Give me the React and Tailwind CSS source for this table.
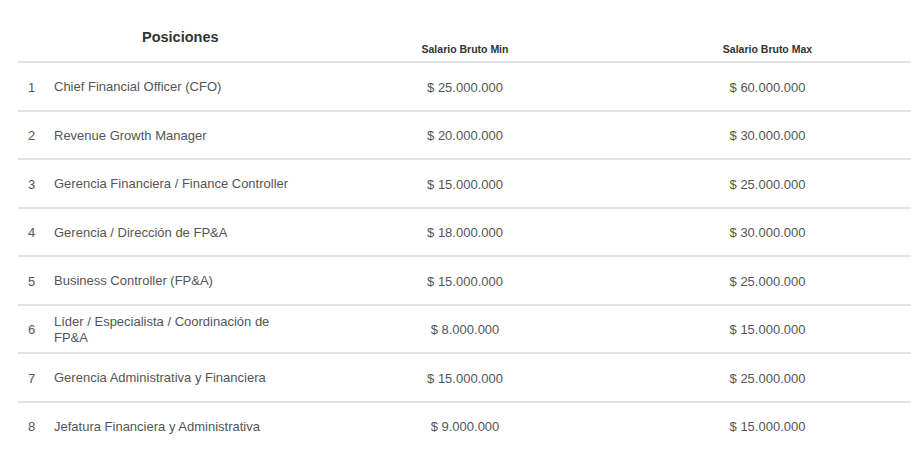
import React from 'react';

const rows = [
  { n: 1, name: 'Chief Financial Officer (CFO)', min: '$ 25.000.000', max: '$ 60.000.000' },
  { n: 2, name: 'Revenue Growth Manager', min: '$ 20.000.000', max: '$ 30.000.000' },
  { n: 3, name: 'Gerencia Financiera / Finance Controller', min: '$ 15.000.000', max: '$ 25.000.000' },
  { n: 4, name: 'Gerencia / Dirección de FP&A', min: '$ 18.000.000', max: '$ 30.000.000' },
  { n: 5, name: 'Business Controller (FP&A)', min: '$ 15.000.000', max: '$ 25.000.000' },
  { n: 6, name: 'Líder / Especialista / Coordinación de FP&A', min: '$ 8.000.000', max: '$ 15.000.000' },
  { n: 7, name: 'Gerencia Administrativa y Financiera', min: '$ 15.000.000', max: '$ 25.000.000' },
  { n: 8, name: 'Jefatura Financiera y Administrativa', min: '$ 9.000.000', max: '$ 15.000.000' },
];

const cols = 'grid grid-cols-[28px_260px_318px_287px]';

const App = () => {
  return (
    <div className="min-h-[450px] bg-white pl-[18px] font-['Liberation_Sans',Arial,sans-serif] text-[#555]">
      {/* header */}
      <div className={`${cols} h-[61px] items-end`}>
        <div className="col-span-2 pb-[12px] pl-[36px] text-left text-[14.5px] font-bold text-[#333]">
          <span className="ml-[88px]">Posiciones</span>
        </div>
        <div className="pb-[3px] text-center text-[10.5px] font-bold text-[#333]">Salario Bruto Min</div>
        <div className="pb-[3px] text-center text-[10.5px] font-bold text-[#333]">Salario Bruto Max</div>
      </div>

      {/* rows */}
      {rows.map((r) => (
        <div key={r.n} className={`${cols} h-[48.5px] items-center border-t-2 border-[#e2e2e2] pt-[2px] text-[13px]`}>
          <div className="pl-[10px]">{r.n}</div>
          <div className="pl-[8px] pr-[12px] leading-[16px]">{r.name}</div>
          <div className="text-center">{r.min}</div>
          <div className="text-center">{r.max}</div>
        </div>
      ))}
    </div>
  );
};

export default App;
